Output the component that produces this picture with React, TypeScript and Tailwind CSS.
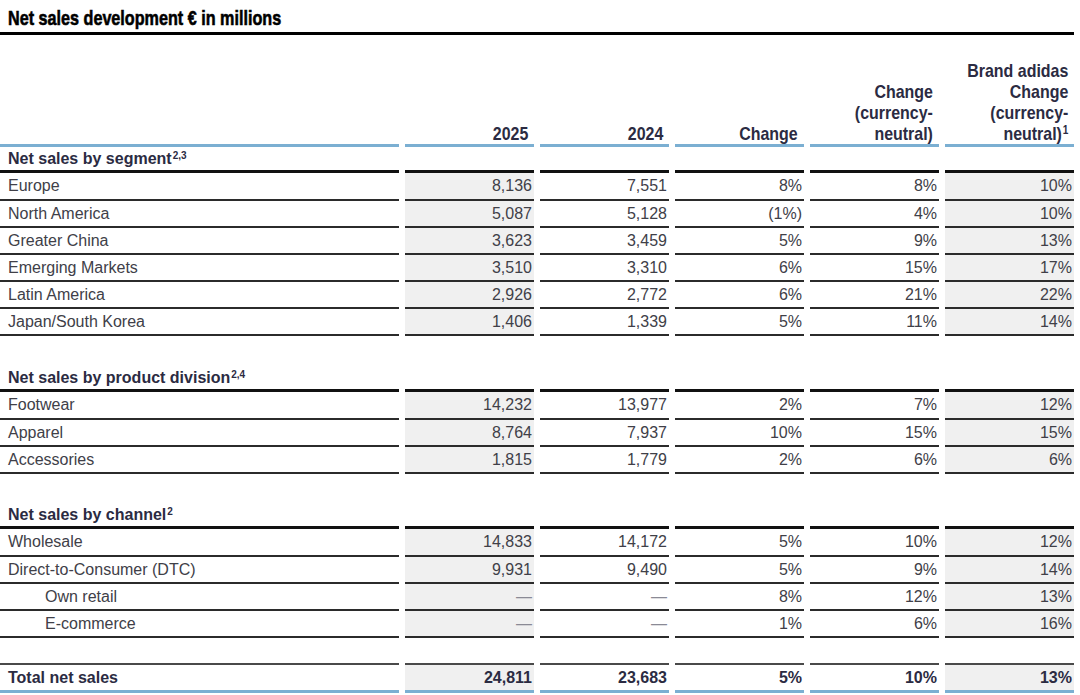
import React from "react";

type Row = {
	label: string;
	values: string[];
	indent?: boolean;
};

type Section = {
	title: string;
	sup: string;
	rows: Row[];
};

const SECTIONS: Section[] = [
	{
		title: "Net sales by segment",
		sup: "2,3",
		rows: [
			{ label: "Europe", values: ["8,136", "7,551", "8%", "8%", "10%"] },
			{ label: "North America", values: ["5,087", "5,128", "(1%)", "4%", "10%"] },
			{ label: "Greater China", values: ["3,623", "3,459", "5%", "9%", "13%"] },
			{ label: "Emerging Markets", values: ["3,510", "3,310", "6%", "15%", "17%"] },
			{ label: "Latin America", values: ["2,926", "2,772", "6%", "21%", "22%"] },
			{ label: "Japan/South Korea", values: ["1,406", "1,339", "5%", "11%", "14%"] },
		],
	},
	{
		title: "Net sales by product division",
		sup: "2,4",
		rows: [
			{ label: "Footwear", values: ["14,232", "13,977", "2%", "7%", "12%"] },
			{ label: "Apparel", values: ["8,764", "7,937", "10%", "15%", "15%"] },
			{ label: "Accessories", values: ["1,815", "1,779", "2%", "6%", "6%"] },
		],
	},
	{
		title: "Net sales by channel",
		sup: "2",
		rows: [
			{ label: "Wholesale", values: ["14,833", "14,172", "5%", "10%", "12%"] },
			{ label: "Direct-to-Consumer (DTC)", values: ["9,931", "9,490", "5%", "9%", "14%"] },
			{ label: "Own retail", values: ["—", "—", "8%", "12%", "13%"], indent: true },
			{ label: "E-commerce", values: ["—", "—", "1%", "6%", "16%"], indent: true },
		],
	},
];

const GRID = "grid grid-cols-[399px_repeat(5,129px)] gap-x-[6px]";

// columns 2025 and brand adidas get the grey fill
const shaded = (i: number) => i === 0 || i === 4;

function HeaderRow() {
	const heads: React.ReactNode[] = [
		"2025",
		"2024",
		"Change",
		<>
			Change
			<br />
			(currency-
			<br />
			neutral)
		</>,
		<>
			Brand adidas
			<br />
			Change
			<br />
			(currency-
			<br />
			neutral)<sup className="text-[12px] ml-[1px]">1</sup>
		</>,
	];
	return (
		<div className={GRID}>
			<div className="h-[112px] border-b-[3px] border-[#7bafd2]" />
			{heads.map((h, i) => (
				<div
					key={i}
					className="h-[112px] border-b-[3px] border-[#7bafd2] flex flex-col justify-end text-right pr-[6px] font-bold text-[19px] leading-[21px] text-[#2b2b42]"
				>
					<div>
						{/* no condensed face installed, so squeeze the bold sans */}
						<span className="inline-block whitespace-nowrap origin-right scale-x-[0.84]">
							{h}
						</span>
					</div>
				</div>
			))}
		</div>
	);
}

function SectionHeader({ title, sup }: { title: string; sup: string }) {
	return (
		<div className={GRID}>
			<div className="h-[26px] border-b-[3px] border-[#111] pl-2 font-bold text-[16px] leading-[23px] text-[#2b2b42]">
				{title}
				<sup className="text-[10px] ml-[1px]">{sup}</sup>
			</div>
			{[0, 1, 2, 3, 4].map((i) => (
				<div key={i} className="h-[26px] border-b-[3px] border-[#111]" />
			))}
		</div>
	);
}

function DataRow({ row, first }: { row: Row; first: boolean }) {
	const h = first ? "h-[28px] leading-[26px]" : "h-[27px] leading-[25px]";
	return (
		<div className={GRID}>
			<div
				className={`${h} border-b-2 border-[#2b2b2b] text-[16px] text-[#404048] ${
					row.indent ? "pl-[45px]" : "pl-2"
				}`}
			>
				{row.label}
			</div>
			{row.values.map((v, i) => (
				<div
					key={i}
					className={`${h} border-b-2 border-[#2b2b2b] text-[16px] text-right pr-[2px] ${
						v === "—" ? "text-[#8a8a95]" : "text-[#404048]"
					} ${shaded(i) ? "bg-[#f0f0f0]" : ""}`}
				>
					{v}
				</div>
			))}
		</div>
	);
}

function TotalRow() {
	const values = ["24,811", "23,683", "5%", "10%", "13%"];
	return (
		<div className={GRID}>
			<div className="h-[30px] border-t-2 border-t-[#4a4a4a] border-b-[3px] border-b-[#7bafd2] pl-2 font-bold text-[16px] leading-[25px] text-[#2b2b42]">
				Total net sales
			</div>
			{values.map((v, i) => (
				<div
					key={i}
					className={`h-[30px] border-t-2 border-t-[#4a4a4a] border-b-[3px] border-b-[#7bafd2] text-right pr-[2px] font-bold text-[16px] leading-[25px] text-[#2b2b42] ${
						shaded(i) ? "bg-[#f0f0f0]" : ""
					}`}
				>
					{v}
				</div>
			))}
		</div>
	);
}

export default function App() {
	return (
		<div className="w-[1080px] h-[695px] bg-white overflow-hidden font-['Liberation_Sans',Arial,sans-serif]">
			<div className="w-[1074px]">
				{/* title */}
				<div className="h-[35px] border-b-[3px] border-black pl-2 pt-[4px] font-bold text-[21px] leading-[28px] text-black">
					<span className="inline-block whitespace-nowrap origin-left scale-x-[0.77] [-webkit-text-stroke:0.6px_black]">
						Net sales development € in millions
					</span>
				</div>

				<HeaderRow />

				{SECTIONS.map((s, idx) => (
					<div key={s.title}>
						{idx > 0 && <div className={idx === 1 ? "h-[30px]" : "h-[29px]"} />}
						<SectionHeader title={s.title} sup={s.sup} />
						{s.rows.map((r, ri) => (
							<DataRow key={r.label} row={r} first={ri === 0} />
						))}
					</div>
				))}

				<div className="h-[25px]" />
				<TotalRow />
			</div>
		</div>
	);
}
